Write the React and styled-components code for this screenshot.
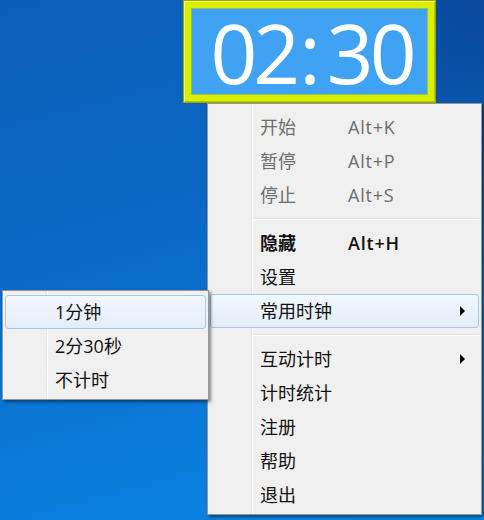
import React from 'react'
import styled, { createGlobalStyle } from 'styled-components'

const GlobalStyle = createGlobalStyle`
  html, body {
    margin: 0;
    padding: 0;
  }
  body {
    font-family: "Open Sans", "Noto Sans CJK SC", sans-serif;
  }
`

const Desktop = styled.div`
  position: relative;
  width: 484px;
  height: 520px;
  overflow: hidden;
  background:
    radial-gradient(circle at 100% 0%, rgba(4, 40, 110, 0.45), transparent 45%),
    linear-gradient(165deg, #0c5fb8 0%, #0b68c6 40%, #0a7bd9 75%, #0986e7 100%);
`

const ClockFrame = styled.div`
  position: absolute;
  left: 183px;
  top: 0;
  width: 253px;
  height: 103px;
  box-sizing: border-box;
  padding: 7px;
  background: #dcee00;
  border: 1px solid #98a800;
  box-shadow: inset 1px 1px 0 #f4ff70, inset -1px -1px 0 #b4c400;
  z-index: 3;
`

const ClockFace = styled.div`
  height: 100%;
  box-sizing: border-box;
  background: #3fa2f2;
  border: 1px solid #8cc25a;
  display: flex;
  align-items: center;
  justify-content: center;
  color: #fff;
  font-family: "Open Sans", sans-serif;
  font-size: 82px;
  line-height: 82px;
`

const Digits = styled.span`
  letter-spacing: -4px;
  margin-right: ${p => (p.left ? '0' : '-4px')};
`

const Colon = styled.span`
  margin: 0 6px 0 3px;
`

const Menu = styled.div`
  position: absolute;
  left: ${p => p.x}px;
  top: ${p => p.y}px;
  width: ${p => p.w}px;
  box-sizing: border-box;
  padding: ${p => p.pt}px 0 2px;
  background-color: #f0f0f0;
  background-image: linear-gradient(
    to right,
    transparent 43px,
    #e2e3e3 43px,
    #e2e3e3 44px,
    #ffffff 44px,
    #ffffff 45px,
    transparent 45px
  );
  border: 1px solid #979797;
  box-shadow: 2px 2px 3px rgba(0, 0, 0, 0.45);
  z-index: ${p => p.z};
  font-family: "Open Sans", "Noto Sans CJK SC", sans-serif;
  font-size: 18px;
`

const Item = styled.div`
  display: grid;
  grid-template-columns: 88px 1fr 18px;
  align-items: center;
  height: 34px;
  box-sizing: border-box;
  margin: 0 2px;
  padding: 0 7px 0 49px;
  border: 1px solid ${p => (p.active ? '#a8c8ec' : 'transparent')};
  border-radius: 3px;
  background: ${p =>
    p.active ? 'linear-gradient(#f3f7fd, #e3edfa)' : 'transparent'};
  color: ${p => (p.disabled ? '#6d6d6d' : '#111')};
  font-weight: ${p => (p.bold ? 600 : 400)};
  white-space: nowrap;
`

const Label = styled.span`
  line-height: 1;
`

const Shortcut = styled.span`
  letter-spacing: 0.8px;
  line-height: 1;
`

const Arrow = styled.span`
  justify-self: center;
  width: 0;
  height: 0;
  border-top: 5px solid transparent;
  border-bottom: 5px solid transparent;
  border-left: 5px solid #000;
`

const Separator = styled.div`
  height: 1px;
  margin: 6px 2px 6px 45px;
  background: #e0e0e0;
  border-bottom: 1px solid #ffffff;
`

const mainItems = [
  { label: '开始', key: 'Alt+K', disabled: true },
  { label: '暂停', key: 'Alt+P', disabled: true },
  { label: '停止', key: 'Alt+S', disabled: true },
  'sep',
  { label: '隐藏', key: 'Alt+H', bold: true },
  { label: '设置' },
  { label: '常用时钟', sub: true, active: true },
  'sep',
  { label: '互动计时', sub: true },
  { label: '计时统计' },
  { label: '注册' },
  { label: '帮助' },
  { label: '退出' },
]

const subItems = [
  { label: '1分钟', active: true },
  { label: '2分30秒' },
  { label: '不计时' },
]

const renderItems = items =>
  items.map((item, i) =>
    item === 'sep' ? (
      <Separator key={i} />
    ) : (
      <Item
        key={i}
        active={item.active}
        disabled={item.disabled}
        bold={item.bold}
      >
        <Label>{item.label}</Label>
        <Shortcut>{item.key}</Shortcut>
        {item.sub ? <Arrow /> : <span />}
      </Item>
    )
  )

const App = () => {
  return (
    <>
      <GlobalStyle />
      <Desktop>
        <ClockFrame>
          <ClockFace>
            <Digits left>02</Digits>
            <Colon>:</Colon>
            <Digits>30</Digits>
          </ClockFace>
        </ClockFrame>

        <Menu x={207} y={103} w={275} pt={6} z={1}>
          {renderItems(mainItems)}
        </Menu>

        <Menu x={2} y={290} w={207} pt={4} z={2}>
          {renderItems(subItems)}
        </Menu>
      </Desktop>
    </>
  )
}

export default App
